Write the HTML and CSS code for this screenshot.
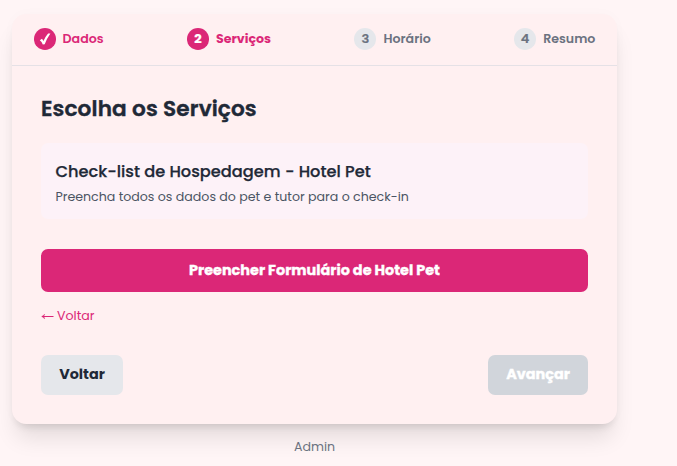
FILE: index.html
```html
<!DOCTYPE html>
<html lang="pt-BR">
<head>
<meta charset="utf-8">
<title>Agendamento</title>
<link rel="stylesheet" href="styles.css">
</head>
<body>
<main class="card">
  <ol class="steps">
    <li class="step done"><span class="dot"><svg class="check" viewBox="0 0 12 12"><path d="M.8 7.2 3 5.8 4.5 8Q6.6 3.4 9.1 .6L11.4.4Q7.9 5.2 5.7 11.3L3.8 11.4Q2.8 8.8 .8 7.2Z"/></svg></span><span>Dados</span></li>
    <li class="step active"><span class="dot">2</span><span>Serviços</span></li>
    <li class="step"><span class="dot">3</span><span>Horário</span></li>
    <li class="step"><span class="dot">4</span><span>Resumo</span></li>
  </ol>
  <section class="content">
    <h1>Escolha os Serviços</h1>
    <div class="service">
      <h2>Check-list de Hospedagem - Hotel Pet</h2>
      <p>Preencha todos os dados do pet e tutor para o check-in</p>
    </div>
    <button class="primary">Preencher Formulário de Hotel Pet</button>
    <a class="back"><svg class="arrow" viewBox="0 0 13 8"><path d="M12.5 4.5H1M3.6 2.4Q3 4.1.8 4.5 3 4.9 3.6 6.6"/></svg><span>Voltar</span></a>
    <div class="actions">
      <button class="prev">Voltar</button>
      <button class="next" disabled>Avançar</button>
    </div>
  </section>
</main>
<footer>Admin</footer>
</body>
</html>
```
FILE: styles.css
```css
* { box-sizing: border-box; }
body {
  margin: 0;
  height: 466px;
  overflow: hidden;
  padding: 14px 60px 0 12px;
  background: #fff5f6;
  color: #1f2937;
  font-family: Poppins, Inter, sans-serif;
}
h1, h2, p, ol { margin: 0; padding: 0; }
button { border: 0; font-family: inherit; padding: 0; border-radius: 7px; font-size: 14.4px; white-space: nowrap; }
.card {
  width: 605px;
  height: 410px;
  border-radius: 14.4px;
  background: #fff0f1;
  box-shadow: 0 18px 22px -4.5px rgba(0, 0, 0, .1), 0 7px 9px -5.4px rgba(0, 0, 0, .12), 0 0 14px rgba(0, 0, 0, .02);
}
.steps {
  display: flex;
  justify-content: space-between;
  height: 52px;
  padding: 0 21.6px;
  border-bottom: 1px solid #e5e1e6;
  list-style: none;
}
.step { display: flex; align-items: center; height: 50px; gap: 7px; color: #6b7280; font-size: 12.6px; font-weight: 600; white-space: nowrap; }
.dot { display: flex; align-items: center; justify-content: center; width: 22px; height: 21.6px; border-radius: 50%; background: #e5e7eb; font-size: 13px; -webkit-text-stroke: .2px currentColor; }
.done, .active { color: #db2777; }
.active { font-weight: 700; }
.done .dot, .active .dot { background: #db2777; color: #fff; }
.check { width: 12px; height: 12px; fill: #fff; }
.content { padding: 28px 29px 0; }
h1 { height: 32px; line-height: 30px; font-size: 21.6px; font-weight: 600; letter-spacing: .12px; white-space: nowrap; -webkit-text-stroke: .4px currentColor; }
.service { height: 76px; margin-top: 17px; padding: 16px 14.4px; border-radius: 7px; background: #fdf2f8; white-space: nowrap; }
h2 { height: 25px; line-height: 25px; font-size: 16.2px; font-weight: 500; letter-spacing: .02px; -webkit-text-stroke: .25px currentColor; }
p { margin-top: 3px; line-height: 20px; font-size: 12.6px; color: #4b5563; }
.primary { display: block; width: 547px; height: 43px; margin-top: 30px; background: #db2777; color: #fff; font-weight: 700; -webkit-text-stroke: .35px currentColor; }
.back { display: flex; align-items: center; gap: 3px; height: 18px; margin-top: 15px; color: #db2777; font-size: 12.6px; }
.arrow { width: 13px; height: 8px; fill: none; stroke: #db2777; stroke-width: 1.1; }
.actions { display: flex; justify-content: space-between; margin-top: 30px; }
.actions button { height: 40px; padding-bottom: 2px; font-weight: 700; }
.prev { width: 82px; background: #e5e7eb; color: #1f2937; }
.next { width: 100px; background: #d1d5db; color: #fff; -webkit-text-stroke: .35px currentColor; }
footer { width: 605px; margin-top: 13px; line-height: 20px; text-align: center; font-size: 12.6px; color: #6b7280; }
```
